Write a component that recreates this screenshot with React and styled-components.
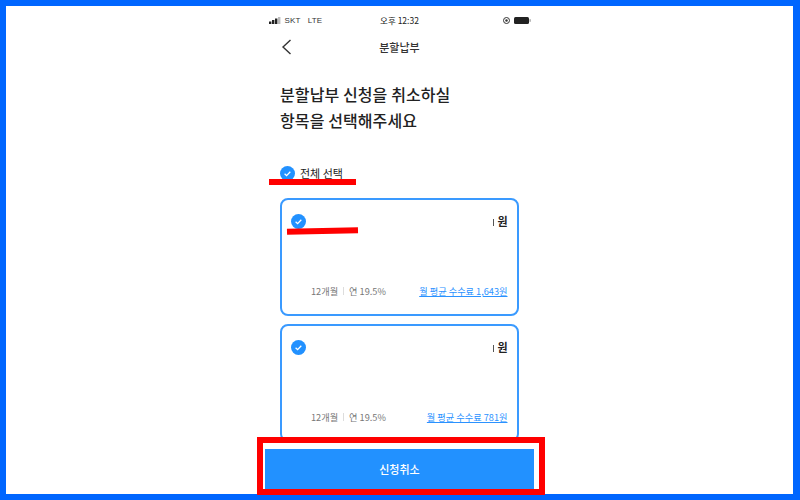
import styled, { createGlobalStyle } from 'styled-components';

const GlobalStyle = createGlobalStyle`
  html, body {
    margin: 0;
    padding: 0;
    background: #fff;
    font-family: "Noto Sans CJK KR", "Noto Sans", sans-serif;
  }
`

const Frame = styled.div`
  box-sizing: border-box;
  width: 800px;
  height: 500px;
  border: solid #0066ff;
  border-width: 6px 7px 6px 6px;
  background: #fff;
  display: flex;
  justify-content: center;
`

const Phone = styled.div`
  position: relative;
  width: 262px;
  height: 488px;
`

const StatusBar = styled.div`
  display: grid;
  grid-template-columns: 1fr auto 1fr;
  align-items: center;
  height: 18px;
  margin-top: 5px;
  font-size: 8px;
  color: #333;
`

const Carrier = styled.div`
  display: flex;
  align-items: center;
  gap: 3px;
  font-family: "Liberation Sans", sans-serif;
  letter-spacing: 0.2px;
`

const Clock = styled.div`
  font-size: 8.5px;
  color: #222;
`

const Battery = styled.div`
  display: flex;
  justify-content: flex-end;
  align-items: center;
  gap: 4px;
`

const NavBar = styled.div`
  position: relative;
  display: flex;
  justify-content: center;
  align-items: center;
  height: 30px;
  margin-top: 3px;
  font-size: 11px;
  font-weight: 500;
  color: #333;
`

const Back = styled.svg`
  position: absolute;
  left: 12px;
  top: 7px;
`

const Content = styled.div`
  padding: 0 12px 0 11.5px;
`

const Heading = styled.h1`
  margin: 20px 0 0;
  font-size: 16px;
  line-height: 25.5px;
  font-weight: 500;
  letter-spacing: 0.1px;
  color: #222;
`

const SelectAll = styled.div`
  position: relative;
  display: flex;
  align-items: center;
  gap: 5px;
  margin-top: 31px;
  height: 18px;
  font-size: 11px;
  color: #222;
`

const AllMark = styled.div`
  position: absolute;
  left: -11px;
  top: 15px;
  width: 87px;
  height: 6px;
  background: #f00;
`

const Card = styled.div`
  position: relative;
  box-sizing: border-box;
  display: flex;
  flex-direction: column;
  justify-content: space-between;
  height: 118px;
  margin-top: ${({ $first }) => ($first ? '16px' : '8px')};
  padding: 13px 9px 16px 9px;
  border: 2px solid #3a9aff;
  border-radius: 8px;
  background: #fff;
`

const CardTop = styled.div`
  display: flex;
  justify-content: space-between;
  align-items: center;
`

const Amount = styled.div`
  font-size: 11px;
  font-weight: 700;
  color: #222;
  &::before {
    content: '';
    display: inline-block;
    width: 1px;
    height: 7px;
    margin-right: 3px;
    background: #555;
  }
`

const CardMark = styled.div`
  position: absolute;
  left: 5px;
  top: 28px;
  width: 71px;
  height: 6px;
  background: #f00;
  transform: rotate(-1.2deg);
`

const CardBottom = styled.div`
  display: flex;
  justify-content: space-between;
  align-items: center;
  padding-left: 20px;
  font-size: 9.2px;
`

const Terms = styled.div`
  display: flex;
  align-items: center;
  color: #777;
`

const Divider = styled.span`
  width: 1px;
  height: 8px;
  margin: 0 5px;
  background: #ddd;
`

const Fee = styled.a`
  color: #2b92ff;
  text-decoration: underline;
`

const Footer = styled.div`
  position: absolute;
  left: -11.5px;
  bottom: -1px;
  box-sizing: border-box;
  width: 288px;
  height: 58px;
  padding: 6px 5px 0 2px;
  border: 6px solid #f00;
  background: #fff;
  display: flex;
`

const CancelButton = styled.button`
  flex: 1;
  height: 40px;
  border: 0;
  background: #2291ff;
  color: #fff;
  font-family: inherit;
  font-size: 11px;
  font-weight: 500;
`

const Check = () => (
  <svg width="15" height="15" viewBox="0 0 15 15">
    <circle cx="7.5" cy="7.5" r="7.5" fill="#2291ff" />
    <path d="M4.6 7.7l2 1.9 3.7-3.8" fill="none" stroke="#fff" strokeWidth="1.3" />
  </svg>
)

const plans = [
  { fee: '월 평균 수수료 1,643원', first: true },
  { fee: '월 평균 수수료 781원' },
]

const App = () => (
  <>
    <GlobalStyle />
    <Frame>
      <Phone>
        <StatusBar>
          <Carrier>
            <svg width="13" height="7" viewBox="0 0 13 7">
              <rect x="0" y="4.5" width="2.4" height="2.5" fill="#222" />
              <rect x="3" y="3" width="2.4" height="4" fill="#222" />
              <rect x="6" y="1.5" width="2.4" height="5.5" fill="#222" />
              <rect x="9" y="0" width="2.4" height="7" fill="#bbb" />
            </svg>
            <span>SKT</span>
            <span style={{ marginLeft: 4 }}>LTE</span>
          </Carrier>
          <Clock>오후 12:32</Clock>
          <Battery>
            <svg width="7" height="7" viewBox="0 0 7 7">
              <circle cx="3.5" cy="3.5" r="3" fill="none" stroke="#333" />
              <circle cx="3.5" cy="3.5" r="1.2" fill="#333" />
            </svg>
            <svg width="17" height="7" viewBox="0 0 17 7">
              <rect x="0" y="0" width="15" height="7" rx="1.5" fill="#222" />
              <rect x="15.5" y="2.2" width="1.2" height="2.6" fill="#999" />
            </svg>
          </Battery>
        </StatusBar>
        <NavBar>
          <Back width="11" height="16" viewBox="0 0 11 16">
            <path d="M9.5 1L2 8l7.5 7" fill="none" stroke="#333" strokeWidth="1.4" />
          </Back>
          분할납부
        </NavBar>
        <Content>
          <Heading>
            분할납부 신청을 취소하실
            <br />
            항목을 선택해주세요
          </Heading>
          <SelectAll>
            <Check />
            전체 선택
            <AllMark />
          </SelectAll>
          {plans.map((plan) => (
            <Card key={plan.fee} $first={plan.first}>
              <CardTop>
                <Check />
                <Amount>원</Amount>
              </CardTop>
              {plan.first && <CardMark />}
              <CardBottom>
                <Terms>
                  12개월
                  <Divider />
                  연 19.5%
                </Terms>
                <Fee>{plan.fee}</Fee>
              </CardBottom>
            </Card>
          ))}
        </Content>
        <Footer>
          <CancelButton>신청취소</CancelButton>
        </Footer>
      </Phone>
    </Frame>
  </>
);

export default App;
